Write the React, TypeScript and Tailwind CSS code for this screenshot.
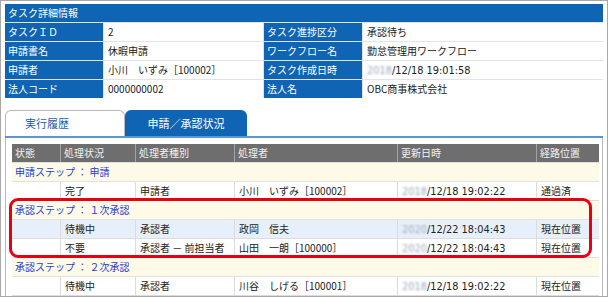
import React from "react";

const BLUE = "bg-[#1064b4]";

function Label({ children }: { children: React.ReactNode }) {
  return (
    <div className={`${BLUE} h-[18px] pl-[3px] text-[10px] leading-[18px] text-white whitespace-nowrap overflow-hidden`}>
      {children}
    </div>
  );
}
function Value({ children }: { children: React.ReactNode }) {
  return (
    <div className="bg-white h-[18px] pl-[4px] text-[10px] leading-[18px] text-[#222] whitespace-nowrap overflow-hidden">
      {children}
    </div>
  );
}

function DateText({ y, rest }: { y: string; rest: string }) {
  return (
    <span className="font-['DejaVu_Sans','Noto_Sans_CJK_JP',sans-serif] text-[9.8px]">
      <span className="blur-[1.3px] text-[#9aa6bb]">{y}</span>
      {rest}
    </span>
  );
}

const cols = ["w-[49px]", "w-[75px]", "w-[99px]", "w-[163px]", "w-[139px]", "flex-1"];

function Step({ text }: { text: string }) {
  return (
    <div className="h-[19px] border-b border-[#e2e2e2] bg-[#fdfbe7] pl-[3px] text-[10px] leading-[18px] text-[#2a3bd4] whitespace-nowrap">
      {text}
    </div>
  );
}

function Row({ cells, bg }: { cells: React.ReactNode[]; bg: string }) {
  return (
    <div className={`flex h-[19px] border-b border-[#dcdcdc] ${bg}`}>
      {cells.map((c, i) => (
        <div
          key={i}
          className={`${cols[i]} h-[18px] pl-[4px] text-[10px] leading-[18px] text-[#222] whitespace-nowrap overflow-hidden ${i < 5 ? "border-r border-[#dcdcdc]" : ""}`}
        >
          {c}
        </div>
      ))}
    </div>
  );
}

export default function App() {
  const headers = ["状態", "処理状況", "処理者種別", "処理者", "更新日時", "経路位置"];
  return (
    <div className="relative w-[608px] h-[297px] overflow-hidden border border-[#a8a8a8] bg-white px-[4px] pt-[3px] font-['Noto_Sans_CJK_JP',sans-serif]">
      {/* top panel */}
      <div className={`${BLUE} h-[18px] pl-[3px] text-[10px] leading-[18px] text-white`}>タスク詳細情報</div>
      <div className="grid grid-cols-[98px_159px_98px_1fr] gap-px bg-[#dfe4ea] pt-px">
        <Label>タスクＩＤ</Label>
        <Value>2</Value>
        <Label>タスク進捗区分</Label>
        <Value>承認待ち</Value>
        <Label>申請書名</Label>
        <Value>休暇申請</Value>
        <Label>ワークフロー名</Label>
        <Value>勤怠管理用ワークフロー</Value>
        <Label>申請者</Label>
        <Value>小川　いずみ［100002］</Value>
        <Label>タスク作成日時</Label>
        <Value>
          <DateText y="2018" rest="/12/18 19:01:58" />
        </Value>
        <Label>法人コード</Label>
        <Value>0000000002</Value>
        <Label>法人名</Label>
        <Value>OBC商事株式会社</Value>
      </div>

      {/* tabs */}
      <div className="mt-[12px] flex h-[26px] items-end">
        <div className="flex h-[26px] w-[120px] items-center justify-center rounded-tl-[6px] rounded-tr-[6px] border border-b-0 border-[#b8b8b8] pr-[36px] text-[11px] text-[#1f5fae]">
          実行履歴
        </div>
        <div className={`${BLUE} flex h-[26px] w-[122px] items-center justify-center rounded-tl-[6px] rounded-tr-[6px] text-[11px] text-white`}>
          申請／承認状況
        </div>
      </div>
      <div className="h-[2px] bg-[#5b95d2]" />

      {/* content panel */}
      <div className="border-l border-r border-[#b8b8b8] pl-[6px] pr-[3px] pt-[6px] h-[200px]">
        <div className="flex h-[19px] bg-[#6e6e6e] border-b border-[#e0e0e0]">
          {headers.map((h, i) => (
            <div
              key={i}
              className={`${cols[i]} h-[18px] pl-[3px] text-[10px] leading-[18px] text-[#f2f2f2] whitespace-nowrap ${i < 5 ? "border-r border-[#a3a3a3]" : ""}`}
            >
              {h}
            </div>
          ))}
        </div>
        <Step text="申請ステップ ： 申請" />
        <Row
          bg="bg-white"
          cells={["", "完了", "申請者", "小川　いずみ［100002］", <DateText y="2018" rest="/12/18 19:02:22" />, "通過済"]}
        />
        <Step text="承認ステップ ： １次承認" />
        <Row
          bg="bg-[#e7f0fa]"
          cells={["", "待機中", "承認者", "政岡　信夫", <DateText y="2020" rest="/12/22 18:04:43" />, "現在位置"]}
        />
        <Row
          bg="bg-white"
          cells={["", "不要", "承認者 － 前担当者", "山田　一朗［100000］", <DateText y="2020" rest="/12/22 18:04:43" />, "現在位置"]}
        />
        <Step text="承認ステップ ： ２次承認" />
        <Row
          bg="bg-white"
          cells={["", "待機中", "承認者", "川谷　しげる［100001］", <DateText y="2018" rest="/12/18 19:02:22" />, "現在位置"]}
        />
        <Row bg="bg-white" cells={["", "", "", "", "", ""]} />
      </div>

      {/* red highlight */}
      <div className="pointer-events-none absolute left-[8px] top-[197px] h-[60px] w-[583px] rounded-[9px] border-[3px] border-[#e60012]" />
    </div>
  );
}
